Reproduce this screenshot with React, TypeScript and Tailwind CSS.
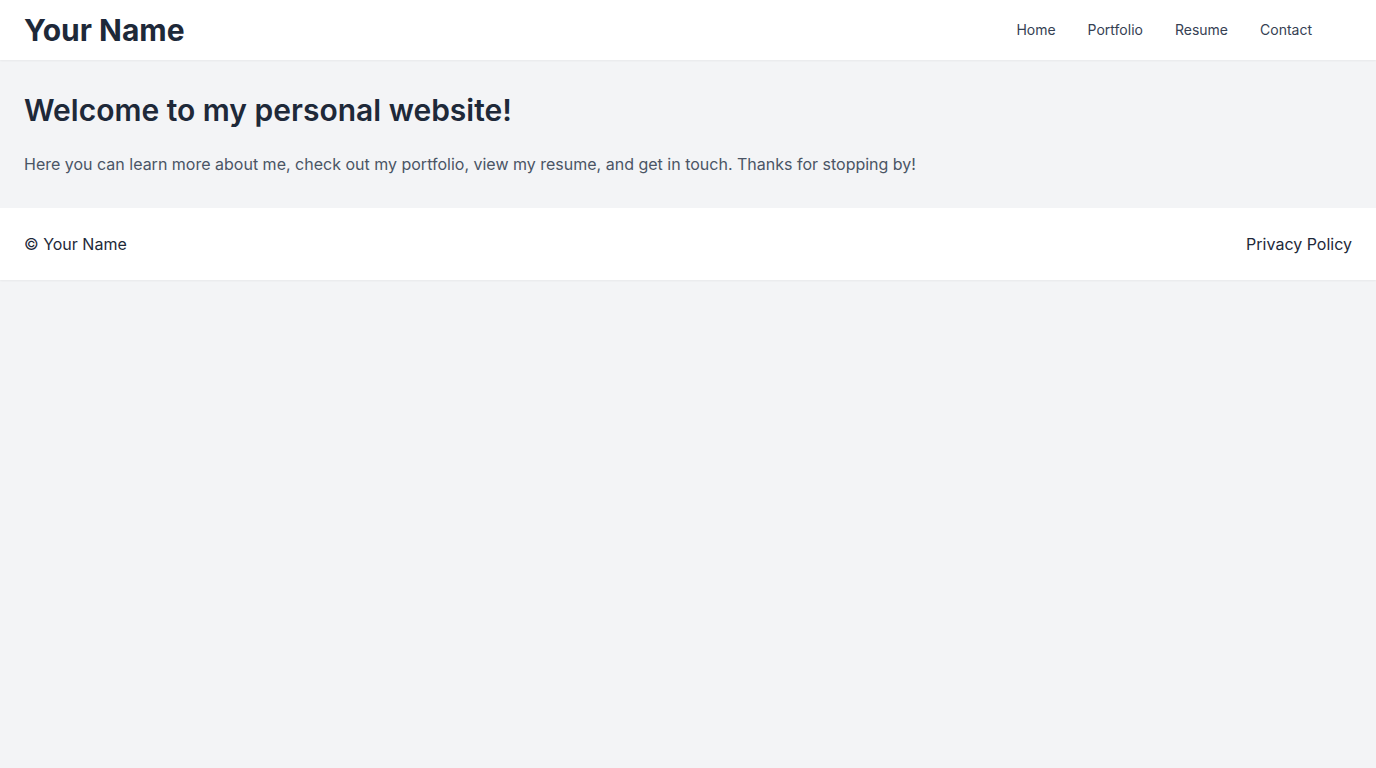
import React from 'react';

const links = ['Home', 'Portfolio', 'Resume', 'Contact'];

const App: React.FC = () => {
    return (
        <div className="min-h-screen bg-gray-100 font-['Inter',sans-serif]">
            <header className="bg-white shadow-[0_1px_2px_0_rgba(0,0,0,0.05)]">
                <div className="flex items-center justify-between px-6 py-3">
                    <h1 className="text-3xl font-bold text-gray-800">Your Name</h1>
                    <nav className="flex pr-6">
                        {links.map((link) => (
                            <a key={link} href="#" className="px-4 text-sm text-gray-700">
                                {link}
                            </a>
                        ))}
                    </nav>
                </div>
            </header>

            <main className="px-6 py-8">
                <h2 className="text-3xl font-semibold text-gray-800 mb-6">Welcome to my personal website!</h2>
                <p className="text-base text-gray-600">
                    Here you can learn more about me, check out my portfolio, view my resume, and get in touch. Thanks for stopping by!
                </p>
            </main>

            <footer className="bg-white shadow-[0_1px_2px_0_rgba(0,0,0,0.05)]">
                <div className="flex items-center justify-between px-6 py-6 text-gray-800">
                    <p>© Your Name</p>
                    <a href="#">Privacy Policy</a>
                </div>
            </footer>
        </div>
    );
};

export default App;
